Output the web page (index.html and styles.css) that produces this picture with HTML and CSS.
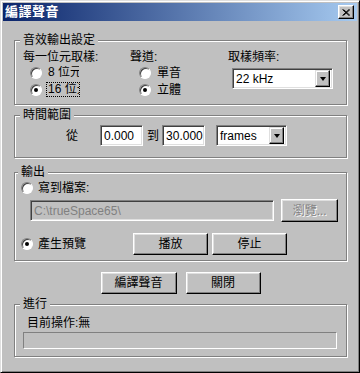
FILE: index.html
```html
<!DOCTYPE html>
<html lang="zh-Hant">
<head>
    <meta charset="UTF-8">
    <meta name="viewport" content="width=device-width, initial-scale=1.0">
    <title>編譯聲音</title>
    <link rel="stylesheet" href="styles.css">
</head>
<body>
    <div class="window">
        <div class="titlebar">
            <span class="title">編譯聲音</span>
            <span class="close-btn">
                <svg width="8" height="7" viewBox="0 0 8 7">
                    <path d="M0.5 0.5 L7 6.5 M1.5 0.5 L8 6.5 M7 0.5 L0.5 6.5 M8 0.5 L1.5 6.5" stroke="#000" stroke-width="1" fill="none"/>
                </svg>
            </span>
        </div>

        <div class="content">
            <!-- output settings -->
            <fieldset class="group group-format">
                <legend>音效輸出設定</legend>
                <div class="format-cols">
                    <div class="col col-bits">
                        <div class="label">每一位元取樣:</div>
                        <div class="radio-row">
                            <span class="radio"></span>
                            <span class="clip">8 位元</span>
                        </div>
                        <div class="radio-row">
                            <span class="radio checked"></span>
                            <span class="clip focus">16 位元</span>
                        </div>
                    </div>
                    <div class="col col-channels">
                        <div class="label">聲道:</div>
                        <div class="radio-row">
                            <span class="radio"></span>
                            <span class="radio-text">單音</span>
                        </div>
                        <div class="radio-row">
                            <span class="radio checked"></span>
                            <span class="radio-text">立體</span>
                        </div>
                    </div>
                    <div class="col col-rate">
                        <div class="label">取樣頻率:</div>
                        <div class="field combo combo-rate">
                            <span class="combo-text">22 kHz</span>
                            <span class="drop-btn"><span class="arrow"></span></span>
                        </div>
                    </div>
                </div>
            </fieldset>

            <!-- time range -->
            <fieldset class="group group-time">
                <legend>時間範圍</legend>
                <div class="time-row">
                    <span class="time-from">從</span>
                    <div class="field num">0.000</div>
                    <span class="time-to">到</span>
                    <div class="field num">30.000</div>
                    <div class="field combo combo-unit">
                        <span class="combo-text">frames</span>
                        <span class="drop-btn"><span class="arrow"></span></span>
                    </div>
                </div>
            </fieldset>

            <!-- output -->
            <fieldset class="group group-output">
                <legend>輸出</legend>
                <div class="radio-row out-row">
                    <span class="radio"></span>
                    <span class="out-text">寫到檔案:</span>
                </div>
                <div class="path-row">
                    <div class="field path disabled">C:\trueSpace65\</div>
                    <div class="btn btn-browse disabled">瀏覽...</div>
                </div>
                <div class="preview-row">
                    <div class="radio-row out-row">
                        <span class="radio checked"></span>
                        <span class="out-text">產生預覽</span>
                    </div>
                    <div class="btn btn-play">播放</div>
                    <div class="btn btn-stop">停止</div>
                </div>
            </fieldset>

            <div class="actions">
                <div class="btn btn-compile">編譯聲音</div>
                <div class="btn btn-close">關閉</div>
            </div>

            <!-- progress -->
            <fieldset class="group group-progress">
                <legend>進行</legend>
                <div class="status">目前操作:無</div>
                <div class="progress"></div>
            </fieldset>
        </div>
    </div>
</body>
</html>
```

FILE: styles.css
```css
body {
    margin: 0;
    font: 12px/14px "Liberation Sans", "Noto Sans CJK TC", sans-serif;
    color: #000;
    background: #fff;
}
.window {
    width: 360px;
    height: 373px;
    box-sizing: border-box;
    background: #c0c0c0;
    border: 1px solid;
    border-color: #dfdfdf #000 #000 #dfdfdf;
    box-shadow: inset 1px 1px #fff, inset -1px -1px #808080;
    padding: 2px;
}
.titlebar {
    height: 18px;
    display: flex;
    align-items: center;
    justify-content: space-between;
    padding: 0 3px 0 2px;
    background: linear-gradient(to right, #0a246a, #a6caf0);
}
.title {
    color: #fff;
    font-weight: bold;
    font-size: 13px;
    letter-spacing: 0.5px;
}
.close-btn {
    width: 16px;
    height: 14px;
    box-sizing: border-box;
    background: #c0c0c0;
    border: 1px solid;
    border-color: #fff #000 #000 #fff;
    box-shadow: inset -1px -1px #808080, inset 1px 1px #dfdfdf;
    display: flex;
    align-items: center;
    justify-content: center;
}
.close-btn svg {
    display: block;
}
.content {
    padding: 0 10px 0 11px;
}

/* group boxes */
.group {
    margin: 0;
    padding: 3px 8px 6px;
    border: 1px solid #808080;
    box-shadow: inset 1px 1px #fff, 1px 1px #fff;
    min-width: 0;
}
.group legend {
    padding: 0 3px;
    margin-left: -3px;
    background: #c0c0c0;
    line-height: 14px;
}
.group-format {
    margin-top: 12px;
}
.group-time {
    margin-top: 3px;
    padding: 3px 8px 11px;
}
.group-output {
    margin-top: 7px;
    padding: 0 8px 5px 6px;
}
.group-progress {
    margin-top: 3px;
    padding: 5px 9px 7px 8px;
}

/* output settings */
.format-cols {
    display: flex;
}
.col-bits {
    width: 107px;
}
.col-channels {
    width: 98px;
}
.label {
    height: 14px;
}
.radio-row {
    display: flex;
    align-items: center;
    height: 17px;
}
.col-bits .radio-row {
    padding-left: 7px;
}
.col-channels .radio-row {
    padding-left: 9px;
}
.radio {
    position: relative;
    flex: none;
    width: 12px;
    height: 12px;
    box-sizing: border-box;
    border-radius: 50%;
    background: #fff;
    border: 1px solid;
    border-color: #808080 #fff #fff #808080;
    box-shadow: inset 1px 1px #404040;
}
.radio.checked::after {
    content: "";
    position: absolute;
    left: 3px;
    top: 3px;
    width: 4px;
    height: 4px;
    border-radius: 50%;
    background: #000;
}
.clip {
    margin-left: 4px;
    width: 31px;
    height: 13px;
    line-height: 13px;
    padding-left: 1px;
    border: 1px solid transparent;
    overflow: hidden;
    white-space: nowrap;
}
.clip.focus {
    border: 1px dotted #000;
}
.radio-text {
    margin-left: 6px;
}

/* fields */
.field {
    box-sizing: border-box;
    height: 21px;
    border: 1px solid;
    border-color: #808080 #fff #fff #808080;
    box-shadow: inset 1px 1px #404040, inset -1px -1px #dfdfdf;
    background: #fff;
    padding-left: 3px;
    display: flex;
    align-items: center;
    white-space: nowrap;
}
.combo {
    padding: 1px 2px 1px 3px;
}
.combo-text {
    flex: 1;
}
.drop-btn {
    width: 15px;
    height: 17px;
    box-sizing: border-box;
    background: #c0c0c0;
    border: 1px solid;
    border-color: #dfdfdf #000 #000 #dfdfdf;
    box-shadow: inset -1px -1px #808080, inset 1px 1px #fff;
    display: flex;
    align-items: center;
    justify-content: center;
}
.arrow {
    width: 0;
    height: 0;
    border-left: 3.5px solid transparent;
    border-right: 3.5px solid transparent;
    border-top: 4px solid #000;
}
.combo-rate {
    margin-top: 4px;
    margin-left: 4px;
    width: 101px;
}

/* time range */
.time-row {
    display: flex;
    align-items: center;
    height: 21px;
}
.time-from {
    margin-left: 43px;
}
.num {
    width: 43px;
    margin-left: 22px;
}
.time-to {
    margin-left: 4px;
}
.time-to + .num {
    margin-left: 3px;
}
.combo-unit {
    width: 71px;
    margin-left: 11px;
}

/* output */
.out-text {
    margin-left: 5px;
}
.path-row {
    display: flex;
    align-items: center;
    margin-top: 3px;
    height: 23px;
    padding-left: 9px;
}
.field.path {
    width: 246px;
    background: #c0c0c0;
    color: #808080;
}
.btn {
    box-sizing: border-box;
    height: 22px;
    background: #c0c0c0;
    border: 1px solid;
    border-color: #fff #000 #000 #fff;
    box-shadow: inset -1px -1px #808080, inset 1px 1px #dfdfdf;
    display: flex;
    align-items: center;
    justify-content: center;
}
.btn.disabled {
    color: #808080;
    text-shadow: 1px 1px #fff;
}
.btn-browse {
    width: 57px;
    height: 23px;
    margin-left: 7px;
}
.preview-row {
    display: flex;
    align-items: center;
    margin-top: 11px;
    height: 22px;
}
.btn-play {
    width: 75px;
    margin-left: 47px;
}
.btn-stop {
    width: 75px;
    margin-left: 4px;
}

/* actions */
.actions {
    display: flex;
    justify-content: center;
    gap: 9px;
    margin-top: 11px;
}
.btn-compile {
    width: 76px;
}
.btn-close {
    width: 75px;
}

/* progress */
.status {
    margin-left: 4px;
    height: 14px;
}
.progress {
    margin-top: 2px;
    height: 17px;
    box-sizing: border-box;
    border: 1px solid;
    border-color: #808080 #fff #fff #808080;
}
```
